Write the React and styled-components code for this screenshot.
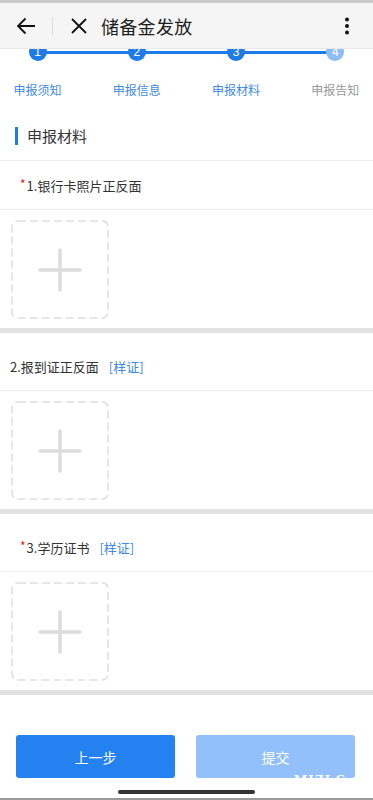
import React from 'react';
import styled, { createGlobalStyle } from 'styled-components';

const GlobalStyle = createGlobalStyle`
  html, body {
    margin: 0;
    padding: 0;
    background: #ffffff;
    font-family: "Noto Sans CJK SC", "Noto Sans", sans-serif;
  }
`;

const Page = styled.div`
  position: relative;
  width: 373px;
  height: 800px;
  overflow: hidden;
  background: #ffffff;
  display: flex;
  flex-direction: column;
`;

const StatusStrip = styled.div`
  height: 3px;
  background: #c9c9c9;
`;

const Header = styled.header`
  position: relative;
  z-index: 2;
  height: 46px;
  display: flex;
  align-items: center;
  background: #f5f5f5;
  border-bottom: 1px solid #e8e8e8;
  box-sizing: border-box;
`;

const IconButton = styled.div`
  display: flex;
  align-items: center;
  justify-content: center;
  width: ${({ w }) => w}px;
  height: 46px;
`;

const VDivider = styled.div`
  width: 1px;
  height: 18px;
  background: #dddddd;
`;

const Title = styled.h1`
  flex: 1;
  margin: 0 0 0 -4px;
  font-size: 18px;
  font-weight: 400;
  color: #1e1e1e;
  letter-spacing: 0.3px;
`;

const Steps = styled.div`
  position: relative;
  height: 62px;
  overflow: hidden;
`;

const StepLine = styled.div`
  position: absolute;
  left: 38px;
  right: 38px;
  top: 2px;
  height: 3px;
  background: #1f7be8;
`;

const StepRow = styled.div`
  position: relative;
  display: grid;
  grid-template-columns: repeat(4, 1fr);
  margin: -6px 0 0 -12px;
  width: 397px;
`;

const StepItem = styled.div`
  display: flex;
  flex-direction: column;
  align-items: center;
`;

const Circle = styled.div`
  width: 18px;
  height: 18px;
  border-radius: 50%;
  background: ${({ done }) => (done ? '#1f7be8' : '#8fbdf5')};
  color: #ffffff;
  font-size: 12px;
  line-height: 18px;
  text-align: center;
  font-family: "Liberation Sans", sans-serif;
`;

const StepLabel = styled.div`
  margin-top: 20px;
  font-size: 12px;
  color: ${({ done }) => (done ? '#3f8ae2' : '#999999')};
`;

const SectionTitle = styled.div`
  display: flex;
  align-items: center;
  height: 49px;
  padding-left: 15px;
  border-bottom: 1px solid #ececec;
  font-size: 15px;
  color: #333333;

  &::before {
    content: '';
    width: 3px;
    height: 18px;
    background: #1f7be8;
    margin-right: 9px;
  }
`;

const ItemLabel = styled.div`
  display: flex;
  align-items: center;
  height: 48px;
  margin-top: ${({ first }) => (first ? 0 : 9)}px;
  padding-left: 10px;
  border-bottom: 1px solid #ececec;
  font-size: 13px;
  color: #333333;
`;

const Star = styled.span`
  color: #e02020;
  font-size: 12px;
  margin-left: 10px;
  margin-right: 1px;
  align-self: flex-start;
  margin-top: 17px;
  line-height: 1;
`;

const Sample = styled.span`
  color: #3f8ae2;
  margin-left: 10px;
`;

const UploadArea = styled.div`
  padding: 10px 11px 9px;
  border-bottom: 5px solid #e2e2e2;
`;

const UploadBox = styled.div`
  width: 98px;
  height: 99px;
  display: flex;
`;

const Spacer = styled.div`
  flex: 1;
`;

const Footer = styled.div`
  display: flex;
  gap: 21px;
  padding: 0 18px 0 16px;
  margin-bottom: 22px;
`;

const Button = styled.div`
  flex: 1;
  height: 43px;
  border-radius: 3px;
  background: ${({ primary }) => (primary ? '#2482f0' : '#93c0fa')};
  color: #ffffff;
  font-size: 14px;
  display: flex;
  align-items: center;
  justify-content: center;
`;

const HomeBar = styled.div`
  position: absolute;
  left: 118px;
  bottom: 6px;
  width: 137px;
  height: 4px;
  border-radius: 2px;
  background: #333333;
`;

const BottomEdge = styled.div`
  position: absolute;
  left: 0;
  right: 0;
  bottom: 0;
  height: 2px;
  background: #9a9a9a;
`;

const Watermark = styled.div`
  position: absolute;
  left: 294px;
  bottom: 18px;
  color: #ffffff;
  font-family: "Liberation Serif", serif;
  font-weight: bold;
  font-size: 14px;
  letter-spacing: 1px;
  height: 9px;
  overflow: hidden;
  line-height: 16px;
`;

const UploadDrawing = () => (
  <svg width="98" height="99" viewBox="0 0 98 99">
    <rect
      x="1"
      y="1"
      width="96"
      height="97"
      rx="6"
      fill="none"
      stroke="#dedede"
      strokeWidth="1.5"
      strokeDasharray="8 4"
    />
    <path d="M49 30v40M29 50h40" stroke="#dcdcdc" strokeWidth="3.5" strokeLinecap="round" />
  </svg>
);

const steps = [
  { n: 1, label: '申报须知', done: true },
  { n: 2, label: '申报信息', done: true },
  { n: 3, label: '申报材料', done: true },
  { n: 4, label: '申报告知', done: false },
];

const items = [
  { label: '1.银行卡照片正反面', required: true, sample: false },
  { label: '2.报到证正反面', required: false, sample: true },
  { label: '3.学历证书', required: true, sample: true },
];

export default function App() {
  return (
    <>
      <GlobalStyle />
      <Page>
        <StatusStrip />
        <Header>
          <IconButton w={52}>
            <svg width="20" height="18" viewBox="0 0 20 18">
              <path d="M19 9H2M9.5 1.5L2 9l7.5 7.5" fill="none" stroke="#111" strokeWidth="1.8" />
            </svg>
          </IconButton>
          <VDivider />
          <IconButton w={52}>
            <svg width="16" height="16" viewBox="0 0 16 16">
              <path d="M1 1l14 14M15 1L1 15" fill="none" stroke="#111" strokeWidth="1.8" />
            </svg>
          </IconButton>
          <Title>储备金发放</Title>
          <IconButton w={52}>
            <svg width="6" height="18" viewBox="0 0 6 18">
              <circle cx="3" cy="2.5" r="2" fill="#111" />
              <circle cx="3" cy="9" r="2" fill="#111" />
              <circle cx="3" cy="15.5" r="2" fill="#111" />
            </svg>
          </IconButton>
        </Header>
        <Steps>
          <StepLine />
          <StepRow>
            {steps.map((s) => (
              <StepItem key={s.n}>
                <Circle done={s.done}>{s.n}</Circle>
                <StepLabel done={s.done}>{s.label}</StepLabel>
              </StepItem>
            ))}
          </StepRow>
        </Steps>
        <SectionTitle>申报材料</SectionTitle>
        {items.map((it, i) => (
          <React.Fragment key={it.label}>
            <ItemLabel first={i === 0}>
              {it.required && <Star>*</Star>}
              {it.label}
              {it.sample && <Sample>[样证]</Sample>}
            </ItemLabel>
            <UploadArea>
              <UploadBox>
                <UploadDrawing />
              </UploadBox>
            </UploadArea>
          </React.Fragment>
        ))}
        <Spacer />
        <Footer>
          <Button primary>上一步</Button>
          <Button>提交</Button>
        </Footer>
        <Watermark>MIZLC</Watermark>
        <HomeBar />
        <BottomEdge />
      </Page>
    </>
  );
}
